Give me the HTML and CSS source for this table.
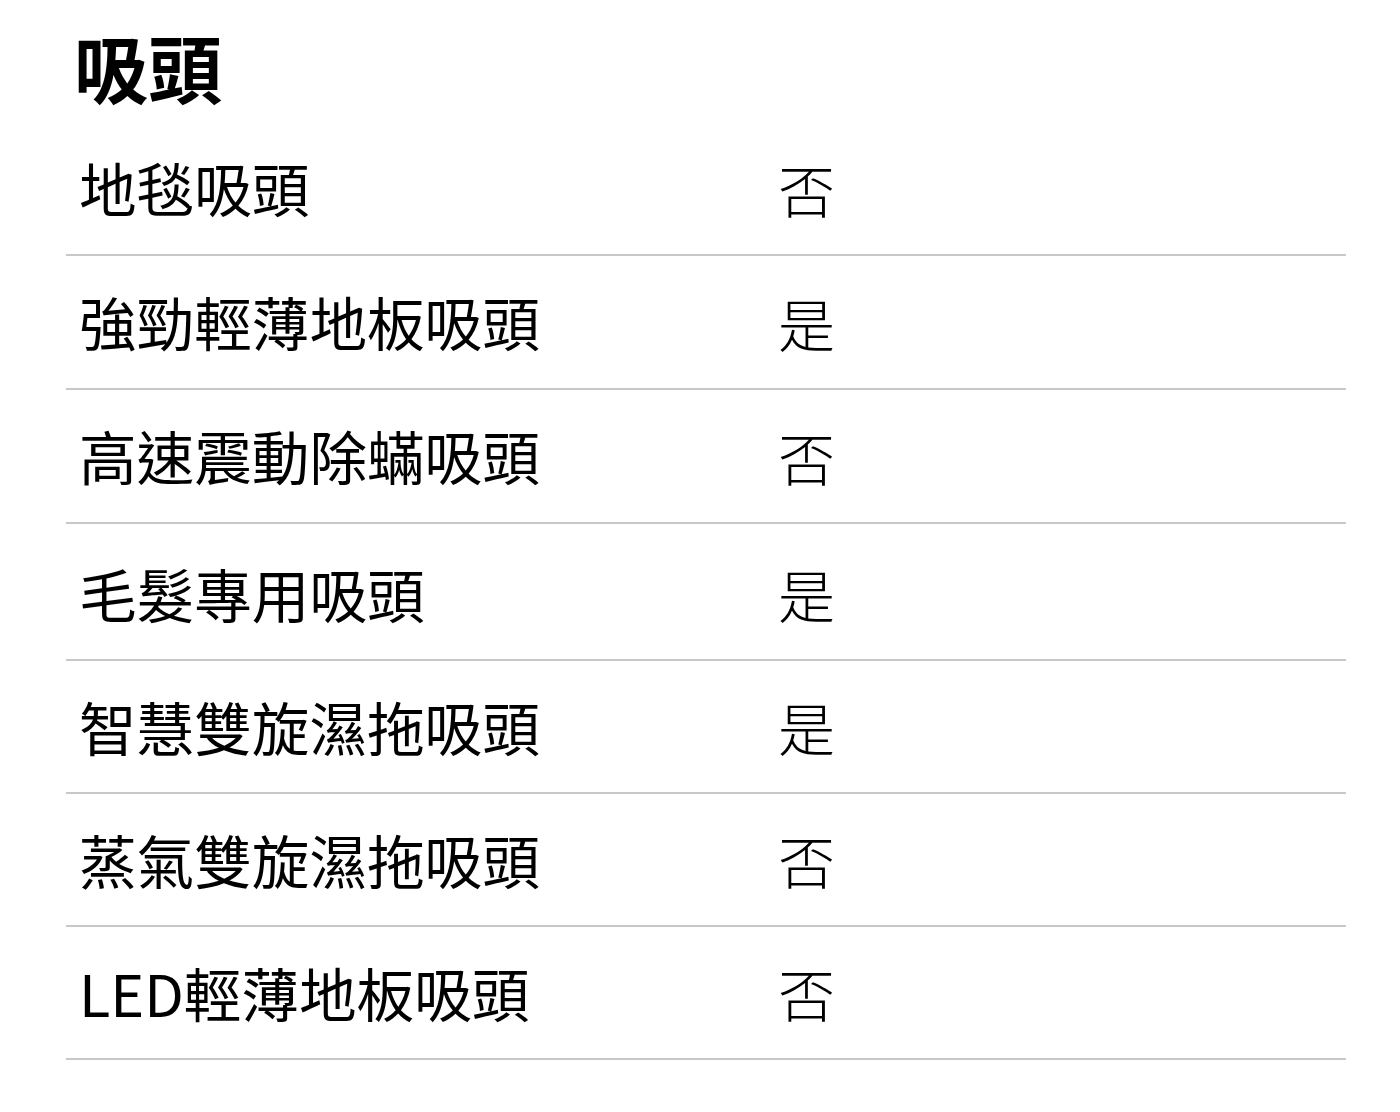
FILE: index.html
```html
<!DOCTYPE html>
<html lang="zh-Hant">
<head>
<meta charset="utf-8">
<title>吸頭</title>
<link rel="stylesheet" href="styles.css">
</head>
<body>
<section class="spec">
  <h2 class="spec-title">吸頭</h2>
  <div class="spec-list">
    <div class="spec-row"><div class="spec-label">地毯吸頭</div><div class="spec-value">否</div></div>
    <div class="spec-row"><div class="spec-label">強勁輕薄地板吸頭</div><div class="spec-value">是</div></div>
    <div class="spec-row"><div class="spec-label">高速震動除蟎吸頭</div><div class="spec-value">否</div></div>
    <div class="spec-row spec-row--tall"><div class="spec-label">毛髮專用吸頭</div><div class="spec-value">是</div></div>
    <div class="spec-row spec-row--short"><div class="spec-label">智慧雙旋濕拖吸頭</div><div class="spec-value">是</div></div>
    <div class="spec-row spec-row--short"><div class="spec-label">蒸氣雙旋濕拖吸頭</div><div class="spec-value">否</div></div>
    <div class="spec-row spec-row--short"><div class="spec-label">LED輕薄地板吸頭</div><div class="spec-value">否</div></div>
  </div>
</section>
</body>
</html>
```

FILE: styles.css
```css
html, body {
  margin: 0;
  padding: 0;
  background: #ffffff;
}
body {
  font-family: "Noto Sans CJK TC", "Noto Sans", sans-serif;
  color: #000;
}
.spec {
  padding: 0 54px 0 66px;
}
.spec-title {
  margin: 0;
  padding: 29px 0 0 8px;
  height: 92px;
  box-sizing: border-box;
  font-size: 74px;
  line-height: 74px;
  font-weight: 700;
}
.spec-list {
  display: flex;
  flex-direction: column;
}
.spec-row {
  display: grid;
  grid-template-columns: 712px 1fr;
  align-items: center;
  height: 134px;
  box-sizing: border-box;
  border-bottom: 2px solid #c8c8c8;
}
.spec-row:first-child {
  height: 164px;
  padding-top: 30px;
}
.spec-row--tall {
  height: 137px;
  padding-top: 4px;
}
.spec-row--short {
  height: 133px;
}
.spec-label {
  padding-left: 13px;
  font-size: 57.6px;
  line-height: 1;
  font-weight: 400;
}
.spec-value {
  font-size: 57px;
  line-height: 1;
  font-weight: 300;
}
```
